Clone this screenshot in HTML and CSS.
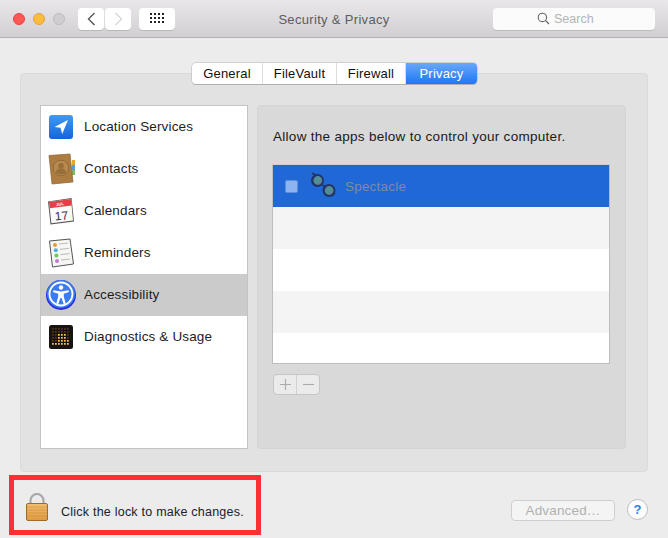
FILE: index.html
```html
<!DOCTYPE html>
<html lang="en">
<head>
<meta charset="utf-8">
<title>Security &amp; Privacy</title>
<link rel="stylesheet" href="styles.css">
</head>
<body>
<div class="window">
  <header class="titlebar">
    <div class="lights">
      <span class="light red"></span><span class="light yellow"></span><span class="light grey"></span>
    </div>
    <div class="nav">
      <span class="tool-btn nav-btn"><svg width="9" height="14" viewBox="0 0 9 14"><path d="M7.500 1 1.500 7l6 6" fill="none" stroke="#555" stroke-width="1.400"/></svg></span>
      <span class="tool-btn nav-btn"><svg width="9" height="14" viewBox="0 0 9 14"><path d="M1.500 1l6 6-6 6" fill="none" stroke="#d6d6d6" stroke-width="1.400"/></svg></span>
    </div>
    <span class="tool-btn grid-btn">
      <svg width="15" height="11" viewBox="0 0 15 11" fill="#222"><path d="M0 0h2v2H0zM4 0h2v2H4zM8 0h2v2H8zM12 0h2v2h-2zM0 4h2v2H0zM4 4h2v2H4zM8 4h2v2H8zM12 4h2v2h-2zM0 8h2v2H0zM4 8h2v2H4zM8 8h2v2H8zM12 8h2v2h-2z"/></svg>
    </span>
    <div class="title">Security &amp; Privacy</div>
    <div class="search">
      <svg width="13" height="13" viewBox="0 0 13 13"><circle cx="5.400" cy="5.400" r="4.200" fill="none" stroke="#666" stroke-width="1.100"/><path d="M8.400 8.400 12 12" stroke="#666" stroke-width="1.300"/></svg>
      <span class="search-label">Search</span>
    </div>
  </header>

  <main class="content">
    <section class="group">
      <nav class="tabs">
        <span class="tab tab-general">General</span><span class="tab tab-filevault">FileVault</span><span class="tab tab-firewall">Firewall</span><span class="tab tab-active">Privacy</span>
      </nav>
      <div class="panes">
        <ul class="sidebar">
          <li class="item">
            <svg class="icon" width="26" height="26" viewBox="0 0 26 26"><defs><linearGradient id="loc" x1="0" y1="0" x2="0" y2="1"><stop offset="0" stop-color="#3f9bf3"/><stop offset="1" stop-color="#1763d8"/></linearGradient></defs><rect x="1" y="1" width="24" height="24" rx="3" fill="url(#loc)"/><path d="M20 6 6.500 13l6 .8 1.700 6.200z" fill="#fff"/></svg>
            <span>Location Services</span>
          </li>
          <li class="item">
            <svg class="icon" width="28" height="32" viewBox="0 0 28 32"><path d="M24 7h3v5h-3z" fill="#e8a13d"/><path d="M24 12h3v5h-3z" fill="#5b9bd8"/><path d="M24 17h3v5h-3z" fill="#7dbb5c"/><path d="M1 2.500 22 1l3 28-21 2z" fill="#ad7c41"/><path d="M1 2.500 22 1l3 28-21 2z" fill="none" stroke="#8a6130" stroke-width=".7"/><circle cx="13" cy="15" r="7.800" fill="#b88a50" stroke="#916a38"/><circle cx="13" cy="12.800" r="2.800" fill="#966e3a"/><path d="M7.600 20c.6-3.400 2.600-4.400 5.400-4.400s4.800 1 5.400 4.400c-3 1.800-7.800 1.800-10.800 0z" fill="#966e3a"/></svg>
            <span>Contacts</span>
          </li>
          <li class="item">
            <svg class="icon icon-wide" width="28" height="28" viewBox="0 0 28 28"><path d="M1 4.500 24.500 1 27 24.500 3.500 27.500z" fill="#555"/><path d="M2 5 24 2l2 21.500-21.600 2.800z" fill="#fafafa"/><path d="M2 5 24 2l.7 6.500-22 2.700z" fill="#e34048"/><text class="cal-month" x="13" y="8.500" transform="rotate(-6 13 8)">JUL</text><text class="cal-day" x="14.500" y="23" transform="rotate(-6 14 18)">17</text></svg>
            <span>Calendars</span>
          </li>
          <li class="item">
            <svg class="icon icon-wide" width="28" height="30" viewBox="0 0 28 30"><path d="M2.500 3 23 1l3.500 25-21 3z" fill="#f6f6f3" stroke="#555" stroke-width="1"/><circle cx="8" cy="7" r="2" fill="#ef9a2e"/><circle cx="8.800" cy="12.300" r="2" fill="#46b1e6"/><circle cx="9.400" cy="17.600" r="2" fill="#66cc55"/><circle cx="10" cy="23" r="2" fill="#c477d6"/><path d="M12 6l9-1M12.800 11.400l9-1M13.400 16.600l9-1M14 22l9-1" stroke="#aaa" stroke-width=".8"/></svg>
            <span>Reminders</span>
          </li>
          <li class="item item-selected">
            <svg class="icon icon-large" width="32" height="34" viewBox="0 0 32 34"><circle cx="16" cy="17" r="15" fill="#2a2be8"/><circle cx="16" cy="16" r="14" fill="#3b7cf0"/><circle cx="16" cy="16" r="11.500" fill="none" stroke="#fff" stroke-width="1.800"/><circle cx="16" cy="9.500" r="2.200" fill="#fff"/><path d="M8.500 12.200 16 13.500l7.500-1.300.5 1.800-5.200 1.800v3l1.900 6.800-1.900.6-2.200-6.200h-1.200l-2.200 6.200-1.900-.6 1.900-6.800v-3L8 14z" fill="#fff"/></svg>
            <span>Accessibility</span>
          </li>
          <li class="item">
            <svg class="icon" width="26" height="26" viewBox="0 0 26 26"><defs><pattern id="dim" x="4" y="4" width="3" height="3" patternUnits="userSpaceOnUse"><rect width="1.700" height="1.700" fill="#4f3719"/></pattern><pattern id="lit" x="4" y="4" width="3" height="3" patternUnits="userSpaceOnUse"><rect width="1.700" height="1.700" fill="#f6c24f"/></pattern></defs><rect x="1" y="1" width="24" height="24" rx="2.500" fill="#181310"/><rect x="4" y="4" width="18" height="18" fill="url(#dim)"/><path d="M10 10h9v6h3v6H4v-3h6z" fill="url(#lit)"/></svg>
            <span>Diagnostics &amp; Usage</span>
          </li>
        </ul>
        <section class="detail">
          <p class="prompt">Allow the apps below to control your computer.</p>
          <div class="table">
            <div class="row row-selected">
              <span class="check"></span>
              <svg class="app-icon" width="28" height="28" viewBox="0 0 28 28"><defs><linearGradient id="lens" x1="0" y1="0" x2="1" y2="1"><stop offset="0" stop-color="#5f7fb0"/><stop offset=".5" stop-color="#4f9490"/><stop offset="1" stop-color="#6a6aa8"/></linearGradient></defs><path d="M3 1l5 3M23 24l3-3" stroke="#1f3566" stroke-width="1.500"/><circle cx="8.500" cy="8.500" r="6.500" fill="#1f3566"/><circle cx="8.800" cy="8.500" r="4.400" fill="url(#lens)"/><path d="M13 13l4 2" stroke="#1f3566" stroke-width="1.500"/><circle cx="20" cy="18.500" r="6.500" fill="#1f3566"/><circle cx="20.200" cy="18.500" r="4.400" fill="url(#lens)"/></svg>
              <span class="app-name">Spectacle</span>
            </div>
            <div class="row row-alt"></div>
            <div class="row"></div>
            <div class="row row-alt"></div>
            <div class="row"></div>
          </div>
          <div class="stepper">
            <span class="step"><svg width="13" height="13" viewBox="0 0 13 13"><path d="M6.500 1v11M1 6.500h11" stroke="#ababab" stroke-width="1.100"/></svg></span>
            <span class="step"><svg width="13" height="13" viewBox="0 0 13 13"><path d="M1 6.500h11" stroke="#ababab" stroke-width="1.100"/></svg></span>
          </div>
        </section>
      </div>
    </section>

    <footer class="footer">
      <div class="lock-box">
        <svg class="lock" width="22" height="28" viewBox="0 0 22 28"><defs><linearGradient id="lockb" x1="0" y1="0" x2="0" y2="1"><stop offset="0" stop-color="#f0c071"/><stop offset="1" stop-color="#e09a42"/></linearGradient></defs><path d="M4.500 11V7.500a6.500 6.500 0 0 1 13 0V11" fill="none" stroke="#a9a9ad" stroke-width="2.200"/><rect x=".5" y="10.500" width="21" height="17" rx="1.500" fill="url(#lockb)" stroke="#a06a2a"/><path d="M1 14h20M1 17h20M1 20h20M1 23h20" stroke="#d08a38" stroke-width=".6"/></svg>
        <span>Click the lock to make changes.</span>
      </div>
      <div class="footer-actions">
        <span class="advanced">Advanced…</span>
        <span class="help">?</span>
      </div>
    </footer>
  </main>
</div>
</body>
</html>
```
FILE: styles.css
```css
* { box-sizing: border-box; }
html, body { margin: 0; padding: 0; }
body {
  width: 668px;
  height: 538px;
  overflow: hidden;
  background: #ececec;
  font-family: "Liberation Sans", Arial, sans-serif;
  font-size: 13.5px;
  color: #1c1c1e;
  letter-spacing: .15px;
}
.window { display: flex; flex-direction: column; height: 538px; }

.titlebar {
  height: 38px;
  flex: none;
  display: flex;
  align-items: center;
  padding: 0 13px;
  border-bottom: 1px solid #b2b0b2;
  background: linear-gradient(#e9e7e9, #d1cfd1);
  position: relative;
}
.lights { display: flex; gap: 8px; width: 65px; }
.light { width: 12px; height: 12px; border-radius: 50%; }
.red { background: #fc5753; border: 1px solid #e6443f; }
.yellow { background: #fdbc40; border: 1px solid #e2a330; }
.grey { background: #cfcdcf; border: 1px solid #bdbbbd; }
.nav { display: flex; gap: 1px; }
.tool-btn {
  height: 22px;
  display: flex;
  align-items: center;
  justify-content: center;
  background: #fff;
  border-radius: 4px;
  box-shadow: 0 1px 0 #b9b7b9;
}
.nav-btn { width: 26px; }
.grid-btn { width: 36px; margin-left: 8px; }
.title {
  position: absolute;
  left: 0;
  right: 0;
  top: 12px;
  text-align: center;
  color: #5e5c5e;
  font-size: 13px;
  letter-spacing: .32px;
}
.search {
  margin-left: auto;
  width: 162px;
  height: 22px;
  display: flex;
  align-items: center;
  padding-left: 44px;
  gap: 4px;
  background: #fbfbfb;
  border-radius: 4px;
  box-shadow: 0 1px 0 #bdbbbd;
  color: #b4b4b4;
  font-size: 12.5px;
  letter-spacing: 0;
}
.search-label { padding-top: 1px; }

.content { flex: 1; display: flex; flex-direction: column; padding: 35px 20px 0; }
.group {
  height: 399px;
  background: #e2e2e2;
  border: 1px solid #dadada;
  border-radius: 4px;
  padding: 0 19px;
}
.tabs {
  display: flex;
  width: 285px;
  height: 21px;
  margin: -11px 0 0 152px;
  border-radius: 4px;
  background: #fff;
  box-shadow: 0 0 0 .5px #b4b4b4, 0 1px 0 #adadad;
}
.tab {
  display: flex;
  align-items: center;
  justify-content: center;
  height: 21px;
  color: #111;
  border-right: 1px solid #dcdcdc;
  font-size: 13px;
  letter-spacing: .2px;
}
.tab-general { width: 71px; }
.tab-filevault { width: 74px; }
.tab-firewall { width: 69px; }
.tab-active {
  width: 71px;
  border: 0;
  color: #fff;
  background: linear-gradient(#69a8fb, #1f76f5);
  border-radius: 0 4px 4px 0;
}
.panes { display: flex; gap: 9px; margin-top: 21px; height: 344px; }
.sidebar {
  list-style: none;
  margin: 0;
  padding: 0;
  width: 208px;
  background: #fff;
  border: 1px solid #c4c4c4;
}
.item {
  height: 42px;
  display: flex;
  align-items: center;
  position: relative;
  padding: 0 0 2px 43px;
}
.item-selected { background: #cbcbcb; }
.icon { position: absolute; left: 7px; top: 50%; transform: translateY(-50%); }
.icon-wide { left: 6px; }
.icon-large { left: 4px; }
.detail {
  width: 369px;
  background: #d9d9d9;
  border-radius: 4px;
  border: 1px solid #d4d4d4;
  padding: 0 15px 0 14px;
}
.prompt { margin: 23px 0 0 1px; height: 35px; line-height: 15px; color: #1a1a1a; letter-spacing: .29px; }
.table {
  width: 338px;
  height: 200px;
  border: 1px solid #bdbdbd;
  border-top-color: #d0d0d0;
  background: #fff;
  overflow: hidden;
}
.row { height: 42px; display: flex; align-items: center; background: #fff; }
.row-alt { background: #f4f4f4; }
.row-selected { background: #2068d6; padding-left: 12px; }
.check {
  width: 13px;
  height: 13px;
  border-radius: 2px;
  background: #8db4f0;
  border: 1px solid #5f8fd8;
}
.app-icon { margin-left: 11px; }
.app-name { margin-left: 8px; color: #7f8aa6; letter-spacing: .2px; }
.stepper {
  display: flex;
  width: 47px;
  height: 21px;
  margin: 10px 0 0 1px;
  background: #ebebeb;
  border: 1px solid #c6c6c6;
  border-radius: 4px;
}
.step { flex: 1; display: flex; align-items: center; justify-content: center; }
.step + .step { border-left: 1px solid #d2d2d2; }

.footer { display: flex; justify-content: space-between; align-items: flex-start; margin: 3px 0 0 -11px; }
.lock-box {
  width: 252px;
  height: 60px;
  border: 5px solid #fc3034;
  display: flex;
  align-items: center;
  padding-left: 12px;
  font-size: 12.5px;
  color: #20202a;
  letter-spacing: .23px;
}
.lock { flex: none; margin-top: 3px; }
.lock-box span { margin-left: 13px; margin-top: 13px; }
.footer-actions { display: flex; align-items: flex-start; gap: 12px; margin-top: 25px; }
.advanced {
  width: 104px;
  height: 21px;
  display: flex;
  align-items: center;
  justify-content: center;
  background: #f4f4f4;
  border: 1px solid #cfcfcf;
  border-radius: 4px;
  color: #b1b1b1;
}
.help {
  width: 21px;
  height: 21px;
  margin-top: -1px;
  border-radius: 50%;
  background: #fdfdfd;
  border: 1px solid #bcbcbc;
  display: flex;
  align-items: center;
  justify-content: center;
  color: #2f7cf0;
  font-weight: 700;
  font-size: 13px;
}
.cal-month { font: 700 4px "Liberation Sans", sans-serif; fill: #fff; text-anchor: middle; letter-spacing: 0; }
.cal-day { font: 12px "Liberation Sans", sans-serif; fill: #333; text-anchor: middle; letter-spacing: 0; }
```
